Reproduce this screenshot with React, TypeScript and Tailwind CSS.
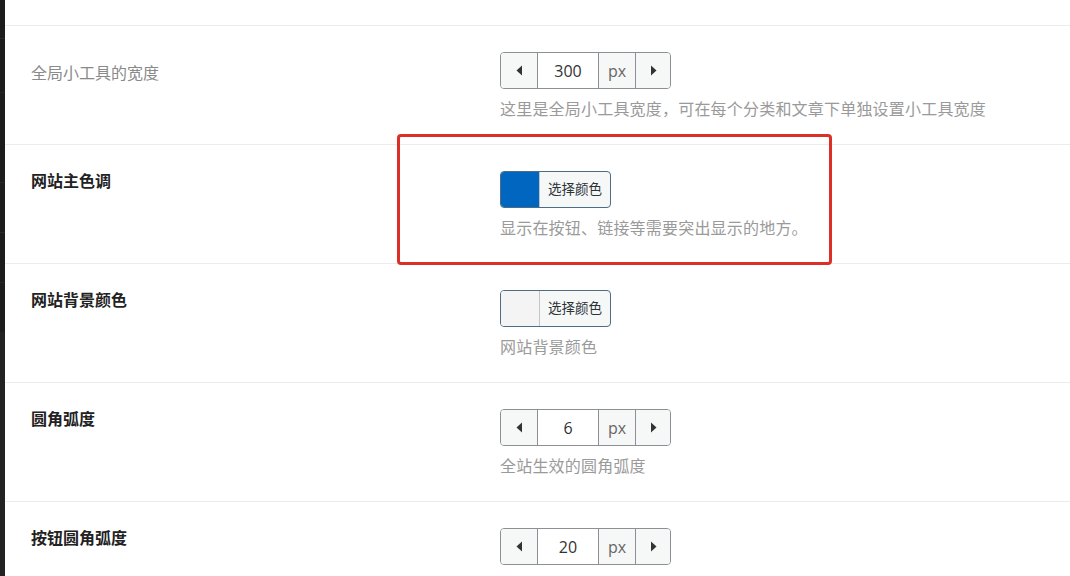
import React from "react";

const font = "font-['Segoe_UI','Open_Sans','Noto_Sans_CJK_SC',sans-serif]";

const Arrow = ({ dir }: { dir: "left" | "right" }) => (
  <svg width="7" height="11" viewBox="0 0 7 11">
    {dir === "left" ? (
      <polygon points="6,0.5 6,10.5 0.5,5.5" fill="#333" />
    ) : (
      <polygon points="1,0.5 1,10.5 6.5,5.5" fill="#333" />
    )}
  </svg>
);

const NumberBox = ({ value }: { value: string }) => (
  <div className="flex h-[37px] w-[171px] overflow-hidden rounded-[4px] border border-[#8c8f94] bg-white">
    <div className="flex w-[37px] items-center justify-center border-r border-[#8c8f94] bg-[#f6f7f7]">
      <Arrow dir="left" />
    </div>
    <div className="flex w-[61px] items-center justify-center border-r border-[#8c8f94] text-[16px] text-[#333]">
      {value}
    </div>
    <div className="flex w-[37px] items-center justify-center border-r border-[#8c8f94] bg-[#f6f7f7] text-[16px] text-[#666]">
      px
    </div>
    <div className="flex w-[34px] items-center justify-center bg-[#f6f7f7]">
      <Arrow dir="right" />
    </div>
  </div>
);

const ColorButton = ({ swatch }: { swatch: string }) => (
  <div className="flex h-[37px] w-[111px] overflow-hidden rounded-[4px] border border-[#4d6d84] bg-[#f6f7f7]">
    <div className={`w-[39px] border-r border-[#c3c4c7] ${swatch}`} />
    <div className="flex flex-1 items-center justify-center text-[13.5px] text-[#2c3338]">选择颜色</div>
  </div>
);

type Row = {
  label: string;
  strong: boolean;
  control: React.ReactNode;
  desc?: string;
};

const rows: Row[] = [
  {
    label: "全局小工具的宽度",
    strong: false,
    control: <NumberBox value="300" />,
    desc: "这里是全局小工具宽度，可在每个分类和文章下单独设置小工具宽度",
  },
  {
    label: "网站主色调",
    strong: true,
    control: <ColorButton swatch="bg-[#0066bf]" />,
    desc: "显示在按钮、链接等需要突出显示的地方。",
  },
  {
    label: "网站背景颜色",
    strong: true,
    control: <ColorButton swatch="bg-[#f4f4f4]" />,
    desc: "网站背景颜色",
  },
  {
    label: "圆角弧度",
    strong: true,
    control: <NumberBox value="6" />,
    desc: "全站生效的圆角弧度",
  },
  {
    label: "按钮圆角弧度",
    strong: true,
    control: <NumberBox value="20" />,
  },
];

export default function App() {
  return (
    <div className={`relative flex h-[576px] w-[1070px] overflow-hidden bg-white ${font}`}>
      <div className="flex w-[5px] flex-col bg-[#1c1c1c]">
        <div className="h-[38px]" />
        <div className="h-[54px] border-t border-[#2a2a2a]" />
        <div className="h-[90px] border-t border-[#262626]" />
        <div className="h-[50px] border-t border-[#262626]" />
        <div className="h-[50px] border-t border-[#2a2a2a]" />
        <div className="h-[50px] border-t border-[#262626]" />
        <div className="flex-1 bg-[#222]" />
      </div>
      <div className="flex-1">
        <div className="h-[25px]" />
        {rows.map((r) => (
          <div key={r.label} className="flex h-[119px] border-t border-[#ececec]">
            <div
              className={
                r.strong
                  ? "w-[495px] pl-[26px] pt-[24px] text-[16px] font-bold leading-[24px] text-[#222]"
                  : "w-[495px] pl-[26px] pt-[35px] text-[16px] leading-[24px] text-[#8a8a8a]"
              }
            >
              {r.label}
            </div>
            <div className="flex flex-col gap-[8px] pt-[26px]">
              {r.control}
              {r.desc && (
                <div className="text-[16px] leading-[24px] tracking-[0.2px] text-[#9a9a9a]">{r.desc}</div>
              )}
            </div>
          </div>
        ))}
      </div>
      <div className="absolute left-[397px] top-[134px] h-[131px] w-[435px] rounded-[4px] border-[3px] border-[#dc2f27]" />
    </div>
  );
}
